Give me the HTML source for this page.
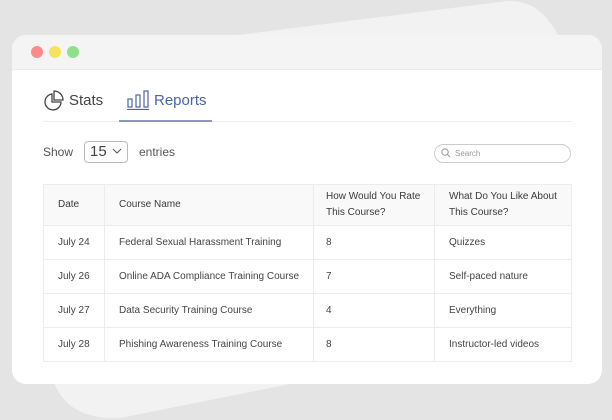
<!DOCTYPE html><html><head><style>
body{margin:0;width:612px;height:420px;background:#e4e4e4;font-family:"Liberation Sans",sans-serif;position:relative;overflow:hidden}
.card{position:absolute;left:12px;top:35px;width:590px;height:349px;background:#fff;border-radius:14px;overflow:hidden}
.tb{height:34px;background:#f4f4f4;border-bottom:1px solid #ebebeb;position:relative}
.dot{position:absolute;top:11px;width:12px;height:12px;border-radius:50%}
.abs{position:absolute}
table{position:absolute;left:31px;top:149px;width:528px;border-collapse:collapse;font-size:10px;color:#444;table-layout:fixed}
td,th{border:1px solid #ececec;text-align:left;padding:0 0 0 14px;font-weight:normal;white-space:nowrap}
th{background:#f9f9f9;height:40px;color:#3a3a3a;line-height:16px}
td{height:33px}
</style></head><body>
<svg class="abs" style="left:0;top:0" width="612" height="420"><path d="M40 60 L500 2 Q540 -5 560 40 L560 330 L120 418 Q70 420 55 385 Z" fill="#f2f2f2"/></svg>
<div class="card">
<div class="tb"><div class="dot" style="left:19px;background:#fd8a8a"></div><div class="dot" style="left:37px;background:#f5e35c"></div><div class="dot" style="left:55px;background:#8ee08a"></div></div>
<svg class="abs" style="left:31px;top:55px" width="22" height="22" fill="none" stroke="#444" stroke-width="1.3"><path d="M9 4 A8 8 0 1 0 18 12 L9 12 Z"/><path d="M11 1 L11 10 L20 10 A9 9 0 0 0 11 1 Z"/></svg>
<div class="abs" style="left:57px;top:57px;font-size:15px;color:#444">Stats</div>
<svg class="abs" style="left:115px;top:55px" width="24" height="20" fill="none" stroke="#4a64a8" stroke-width="1.2"><rect x="1" y="9" width="4" height="8"/><rect x="9" y="5" width="4" height="12"/><rect x="17" y="1" width="4" height="16"/><path d="M0 19.5 H22"/></svg>
<div class="abs" style="left:142px;top:57px;font-size:15px;color:#4a64a8">Reports</div>
<div class="abs" style="left:31px;top:86px;width:529px;height:1px;background:#eee"></div>
<div class="abs" style="left:107px;top:85px;width:93px;height:2px;background:#8a98bd"></div>
<div class="abs" style="left:31px;top:110px;font-size:12px;color:#555">Show</div>
<div class="abs" style="left:72px;top:106px;border:1px solid #bbb;border-radius:4px;font-size:15px;color:#444;line-height:20px;padding-left:5px;box-sizing:border-box;width:44px;height:22px">15</div>
<svg class="abs" style="left:100px;top:113px" width="10" height="6" fill="none" stroke="#555"><path d="M1 1 L5 5 L9 1"/></svg>
<div class="abs" style="left:127px;top:110px;font-size:12px;color:#555">entries</div>
<div class="abs" style="left:422px;top:109px;width:137px;height:19px;border:1px solid #ccc;border-radius:10px;box-sizing:border-box"></div>
<svg class="abs" style="left:429px;top:113px" width="10" height="10" fill="none" stroke="#999"><circle cx="4" cy="4" r="3.2"/><path d="M6.5 6.5 L9 9"/></svg>
<div class="abs" style="left:443px;top:114px;font-size:8px;color:#999">Search</div>
<table>
<colgroup><col style="width:61px"><col style="width:209px"><col style="width:121px"><col style="width:137px"></colgroup>
<tr><th>Date</th><th>Course Name</th><th style="padding-left:12px">How Would You Rate<br>This Course?</th><th>What Do You Like About<br>This Course?</th></tr>
<tr><td>July 24</td><td>Federal Sexual Harassment Training</td><td style="padding-left:12px">8</td><td>Quizzes</td></tr>
<tr><td>July 26</td><td>Online ADA Compliance Training Course</td><td style="padding-left:12px">7</td><td>Self-paced nature</td></tr>
<tr><td>July 27</td><td>Data Security Training Course</td><td style="padding-left:12px">4</td><td>Everything</td></tr>
<tr><td>July 28</td><td>Phishing Awareness Training Course</td><td style="padding-left:12px">8</td><td>Instructor-led videos</td></tr>
</table>
</div>
</body></html>
